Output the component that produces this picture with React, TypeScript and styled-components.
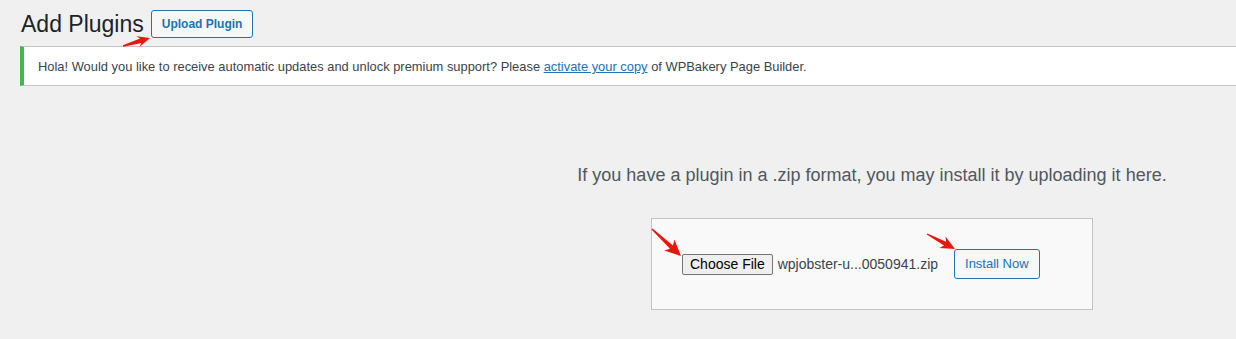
import React from 'react'
import styled, { createGlobalStyle } from 'styled-components'

const colors = {
    page: '#f0f0f1',
    text: '#3c434a',
    muted: '#50575e',
    blue: '#2271b1',
    border: '#c3c4c7',
    green: '#46b450',
    red: '#e8170e',
}

// annotation arrows drawn over the screenshot: [tailX, tailY, tipX, tipY, headHalfWidth]
const ARROWS = [
    [123, 46, 150, 38, 5.5],
    [652, 229, 681, 256, 7.5],
    [927, 234, 955, 249, 6.5],
]

const arrowPoints = (x1: number, y1: number, x2: number, y2: number, hw: number) => {
    const dx = x2 - x1
    const dy = y2 - y1
    const len = Math.sqrt(dx * dx + dy * dy)
    const ux = dx / len
    const uy = dy / len
    const nx = -uy
    const ny = ux
    const head = Math.min(16, len * 0.45)
    // local (along, across) pairs
    const pts: [number, number][] = [
        [0, -0.7],
        [len - head + 3, -2.2],
        [len - head, -hw],
        [len, 0],
        [len - head, hw],
        [len - head + 3, 2.2],
        [0, 0.7],
    ]
    return pts
        .map(([a, c]) => `${(x1 + ux * a + nx * c).toFixed(1)},${(y1 + uy * a + ny * c).toFixed(1)}`)
        .join(' ')
}

const App: React.FC = () => {
    return (
        <>
            <GlobalStyle />
            <StyledPage>
                <StyledWrap>
                    <StyledHeader>
                        <StyledTitle>Add Plugins</StyledTitle>
                        <StyledActionButton>Upload Plugin</StyledActionButton>
                    </StyledHeader>

                    <StyledNotice>
                        Hola! Would you like to receive automatic updates and unlock premium support? Please{' '}
                        <StyledLink href="#">activate your copy</StyledLink> of WPBakery Page Builder.
                    </StyledNotice>

                    <StyledUpload>
                        <StyledHelp>If you have a plugin in a .zip format, you may install it by uploading it here.</StyledHelp>
                        <StyledForm>
                            <StyledFileButton type="button">Choose File</StyledFileButton>
                            <StyledFileName>wpjobster-u...0050941.zip</StyledFileName>
                            <StyledInstallButton type="button">Install Now</StyledInstallButton>
                        </StyledForm>
                    </StyledUpload>
                </StyledWrap>

                <StyledOverlay width="1236" height="339" viewBox="0 0 1236 339">
                    {ARROWS.map(([x1, y1, x2, y2, hw], i) => (
                        <polygon key={i} points={arrowPoints(x1, y1, x2, y2, hw)} fill={colors.red} />
                    ))}
                </StyledOverlay>
            </StyledPage>
        </>
    )
}

export default App

const GlobalStyle = createGlobalStyle`
    html, body {
        margin: 0;
        padding: 0;
        background: ${colors.page};
        overflow: hidden;
    }
    body {
        font-family: "Liberation Sans", Arial, sans-serif;
        color: ${colors.text};
    }
`

const StyledPage = styled.div`
    position: relative;
    width: 1236px;
    height: 339px;
    overflow: hidden;
`

const StyledWrap = styled.div`
    width: 1704px;
    margin-left: 20px;
`

const StyledHeader = styled.div`
    display: flex;
    align-items: center;
    padding-top: 8px;
    height: 31px;
`

const StyledTitle = styled.h1`
    font-size: 23px;
    font-weight: 400;
    line-height: 30px;
    margin: 0 7px 0 1px;
    color: #1d2327;
`

const StyledActionButton = styled.button`
    font-family: "Liberation Sans", Arial, sans-serif;
    font-size: 12px;
    font-weight: 700;
    height: 28px;
    padding: 0 10px;
    border: 1px solid ${colors.blue};
    border-radius: 3px;
    background: #f6f7f7;
    color: ${colors.blue};
    line-height: 26px;
`

const StyledNotice = styled.div`
    margin-top: 7px;
    background: #fff;
    border: 1px solid ${colors.border};
    border-left: 4px solid ${colors.green};
    border-right: none;
    padding: 11px 12px 9px 14px;
    font-size: 12.9px;
    line-height: 18px;
`

const StyledLink = styled.a`
    color: ${colors.blue};
    text-decoration: underline;
`

const StyledUpload = styled.div`
    text-align: center;
    padding-top: 77px;
`

const StyledHelp = styled.p`
    margin: 0;
    font-size: 18px;
    line-height: 24px;
    color: ${colors.muted};
`

const StyledForm = styled.div`
    display: flex;
    align-items: center;
    width: 380px;
    height: 30px;
    margin: 31px auto 0;
    padding: 30px;
    background: #f9f9f9;
    border: 1px solid ${colors.border};
`

const StyledFileButton = styled.button`
    font-family: "Liberation Sans", Arial, sans-serif;
    font-size: 14px;
    color: #000;
    height: 21px;
    line-height: 19px;
    padding: 0 7px;
    border: 1px solid #767676;
    border-radius: 2px;
    background: #efefef;
`

const StyledFileName = styled.span`
    margin-left: 5px;
    font-size: 14px;
    color: ${colors.text};
`

const StyledInstallButton = styled.button`
    font-family: "Liberation Sans", Arial, sans-serif;
    margin-left: 16px;
    font-size: 13px;
    height: 30px;
    line-height: 28px;
    padding: 0 10px;
    border: 1px solid ${colors.blue};
    border-radius: 3px;
    background: #f6f7f7;
    color: ${colors.blue};
`

const StyledOverlay = styled.svg`
    position: absolute;
    left: 0;
    top: 0;
    pointer-events: none;
`
